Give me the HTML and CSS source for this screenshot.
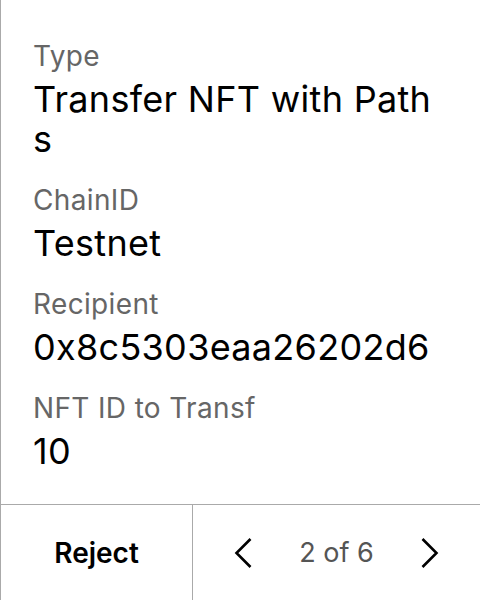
FILE: index.html
```html
<!DOCTYPE html>
<html>
<head>
<meta charset="utf-8">
<link rel="stylesheet" href="styles.css">
</head>
<body>
<div class="screen">
  <div class="content">
    <div class="field">
      <div class="label">Type</div>
      <div class="value">Transfer NFT with Paths</div>
    </div>
    <div class="field">
      <div class="label">ChainID</div>
      <div class="value">Testnet</div>
    </div>
    <div class="field">
      <div class="label">Recipient</div>
      <div class="value">0x8c5303eaa26202d6</div>
    </div>
    <div class="field">
      <div class="label">NFT ID to Transf</div>
      <div class="value">10</div>
    </div>
  </div>
  <div class="footer">
    <div class="reject">Reject</div>
    <div class="nav">
      <div class="arrow">
        <svg width="20" height="34" viewBox="0 0 20 34"><path d="M17.5 3 L3.5 17 L17.5 31" fill="none" stroke="#000" stroke-width="2.6"/></svg>
      </div>
      <div class="page">2 of 6</div>
      <div class="arrow">
        <svg width="20" height="34" viewBox="0 0 20 34"><path d="M2.5 3 L16.5 17 L2.5 31" fill="none" stroke="#000" stroke-width="2.6"/></svg>
      </div>
    </div>
  </div>
</div>
</body>
</html>
```
FILE: styles.css
```css
html, body {
  margin: 0;
  padding: 0;
  background: #fff;
}
body {
  font-family: Inter, "Noto Sans", sans-serif;
  color: #000;
}
.screen {
  width: 480px;
  height: 600px;
  box-sizing: border-box;
  border-left: 1px solid #aaa;
  display: flex;
  flex-direction: column;
}
.content {
  flex: 1;
  padding: 40px 40px 0 32px;
  display: flex;
  flex-direction: column;
  gap: 25px;
  overflow: hidden;
}
.label {
  font-size: 28px;
  line-height: 32px;
  letter-spacing: 0.35px;
  color: #666;
  margin-bottom: 7px;
  white-space: nowrap;
  overflow: hidden;
}
.value {
  font-size: 36px;
  line-height: 40px;
  letter-spacing: 0.3px;
  color: #000;
  word-break: break-all;
}
.footer {
  height: 95px;
  flex: none;
  border-top: 1px solid #aaa;
  display: flex;
}
.reject {
  width: 191px;
  border-right: 1px solid #aaa;
  display: flex;
  align-items: center;
  justify-content: center;
  font-size: 28px;
  font-weight: 600;
}
.nav {
  flex: 1;
  display: grid;
  grid-template-columns: 100px 1fr 100px;
  align-items: center;
}
.arrow {
  display: flex;
  justify-content: center;
  align-items: center;
}
.page {
  text-align: center;
  font-size: 27px;
  color: #555;
}
```
